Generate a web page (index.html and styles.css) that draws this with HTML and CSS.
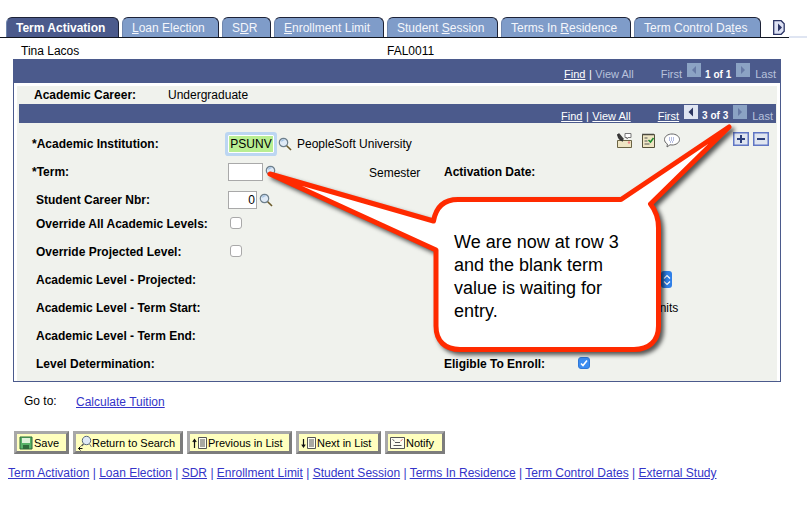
FILE: index.html
```html
<!DOCTYPE html>
<html lang="en">
<head>
<meta charset="utf-8">
<title>Term Activation</title>
<link rel="stylesheet" href="styles.css">
</head>
<body>
<svg class="defs" width="0" height="0" aria-hidden="true">
  <symbol id="mag" viewBox="0 0 14 14">
    <circle cx="5.500" cy="5.500" r="4.200" fill="#dfeaf6" stroke="#6d7f8c" stroke-width="1.200"/>
    <path d="M3.500 4.500a2.500 2.500 0 0 1 3-1.500" fill="none" stroke="#9cbde0" stroke-width="1.200"/>
    <path d="M8.700 8.700L13 13" stroke="#6b5a2a" stroke-width="1.600"/>
  </symbol>
</svg>

<nav class="tabs">
  <a class="tab tab-active t1">Term Activation</a>
  <a class="tab t2"><u>L</u>oan Election</a>
  <a class="tab t3">S<u>D</u>R</a>
  <a class="tab t4"><u>E</u>nrollment Limit</a>
  <a class="tab t5">Student <u>S</u>ession</a>
  <a class="tab t6">Terms In <u>R</u>esidence</a>
  <a class="tab t7">Term Control Da<u>t</u>es</a>
  <span class="tab-more">
    <svg width="12" height="15" viewBox="0 0 12 15"><path d="M.7.700h7.500l3 3v7.600l-3 3H.7z" fill="#dfe3f5" stroke="#2c3566" stroke-width="1.300"/><path d="M5 3.500l4 4-4 4z" fill="#2c3566"/></svg>
  </span>
</nav>

<div class="meta"><span class="meta-name">Tina Lacos</span><span>FAL0011</span></div>

<section class="panel">
  <div class="bar bar-outer">
    <a class="nav-link">Find</a><span class="sep">|</span><span class="dim">View All</span>
    <span class="dim first-gap">First</span>
    <span class="pager pager-off"><svg width="14" height="14" viewBox="0 0 14 14"><path d="M9 3L5 7l4 4z" fill="#4b5a8c" opacity=".55"/></svg></span>
    <b class="count">1 of 1</b>
    <span class="pager pager-off"><svg width="14" height="14" viewBox="0 0 14 14"><path d="M5 3l4 4-4 4z" fill="#4b5a8c" opacity=".55"/></svg></span>
    <span class="dim">Last</span>
  </div>

  <div class="inner">
    <div class="career"><b class="career-label">Academic Career:</b><span>Undergraduate</span></div>
    <div class="bar bar-inner">
      <a class="nav-link">Find</a><span class="sep">|</span><a class="nav-link">View All</a>
      <a class="nav-link first-gap">First</a>
      <span class="pager pager-on"><svg width="14" height="14" viewBox="0 0 14 14"><path d="M9 2.500L4.500 7 9 11.500z" fill="#2b3560"/></svg></span>
      <b class="count">3 of 3</b>
      <span class="pager pager-off"><svg width="14" height="14" viewBox="0 0 14 14"><path d="M5 3l4 4-4 4z" fill="#4b5a8c" opacity=".55"/></svg></span>
      <span class="dim">Last</span>
    </div>

    <div class="form">
      <div class="row">
        <label class="lbl lbl-req">*Academic Institution:</label>
        <span class="psunv">PSUNV</span>
        <svg class="mag" width="14" height="14"><use href="#mag"/></svg>
        <span class="inst">PeopleSoft University</span>
        <span class="tools">
          <svg width="17" height="16" viewBox="0 0 17 16"><path d="M1.500 8.500h14v7h-14z" fill="#efe6c4" stroke="#6b6444"/><path d="M1 3l2-2 5 6-2 2z" fill="#3c3c3c"/><path d="M2 2c0 4 2 6 5 7" fill="none" stroke="#333" stroke-width="1.500"/><path d="M9 1.500h6v4h-3l-1 1.500v-1.500H9z" fill="#fff" stroke="#777"/><circle cx="13" cy="10.500" r="1.200" fill="#e88"/></svg>
          <svg width="13" height="15" viewBox="0 0 13 15"><path d="M.5 1.500h12v13H.5z" fill="#efe6c4" stroke="#55503a"/><path d="M1 .5v2M3 .5v2M5 .5v2M7 .5v2M9 .5v2M11 .5v2" stroke="#444"/><path d="M2.500 5h3M2.500 8h3M2.500 11h5" stroke="#555"/><path d="M6.500 7l2 2 3-4" fill="none" stroke="#1d8a2e" stroke-width="1.500"/></svg>
          <svg width="16" height="15" viewBox="0 0 16 15"><path d="M8 1c4 0 7.500 2.300 7.500 5.500S12 12 8 12c-.7 0-1.400-.1-2-.2L3 14l.4-3C1.600 10 .5 8.400.5 6.500.5 3.300 4 1 8 1z" fill="#fff" stroke="#666"/><path d="M5 5h6M5 7h6M6 9h4" stroke="#6b7cc4" stroke-dasharray="1 1"/></svg>
        </span>
        <span class="addrem">
          <span class="rowbtn"><svg width="12" height="10" viewBox="0 0 12 10"><path d="M2 5h8M6 1v8" stroke="#2c3f7c" stroke-width="2"/></svg></span>
          <span class="rowbtn"><svg width="12" height="10" viewBox="0 0 12 10"><path d="M2 5h8" stroke="#2c3f7c" stroke-width="2"/></svg></span>
        </span>
      </div>

      <div class="row">
        <label class="lbl lbl-req">*Term:</label>
        <span class="field field-term"></span>
        <svg class="mag" width="14" height="14"><use href="#mag"/></svg>
        <span class="semester">Semester</span>
        <label class="lbl activation">Activation Date:</label>
      </div>

      <div class="row">
        <label class="lbl">Student Career Nbr:</label>
        <span class="field field-num">0</span>
        <svg class="mag" width="14" height="14"><use href="#mag"/></svg>
      </div>

      <div class="row row-short">
        <label class="lbl">Override All Academic Levels:</label>
        <span class="check"></span>
      </div>

      <div class="row">
        <label class="lbl">Override Projected Level:</label>
        <span class="check"></span>
      </div>

      <div class="row"><label class="lbl">Academic Level - Projected:</label><span class="select"><svg width="8" height="14" viewBox="0 0 8 14"><path d="M1 5.500l3-3 3 3M1 8.500l3 3 3-3" fill="none" stroke="#fff" stroke-width="1.200"/></svg></span></div>
      <div class="row"><label class="lbl">Academic Level - Term Start:</label><span class="units">Units</span></div>
      <div class="row"><label class="lbl">Academic Level - Term End:</label></div>
      <div class="row">
        <label class="lbl">Level Determination:</label>
        <label class="lbl eligible">Eligible To Enroll:</label>
        <span class="check check-on"><svg width="10" height="10" viewBox="0 0 10 10"><path d="M2 5.500l2 2 4-5" fill="none" stroke="#fff" stroke-width="1.600"/></svg></span>
      </div>
    </div>
  </div>
</section>

<div class="goto"><span class="goto-label">Go to:</span><a class="link goto-link">Calculate Tuition</a></div>

<div class="buttons">
  <button class="btn btn-save"><svg width="14" height="14" viewBox="0 0 14 14"><path d="M1 1h12v12H1z" fill="#58b368" stroke="#2e6b3a"/><path d="M3 2h8v5H3z" fill="#dff2d8"/><path d="M4 9h6v4H4z" fill="#2e6b3a"/></svg>Save</button>
  <button class="btn btn-return"><svg width="14" height="16" viewBox="0 0 14 16"><circle cx="8.500" cy="5.500" r="4.200" fill="#dfeaf6" stroke="#58687a"/><path d="M5.500 9l-2 2" stroke="#555" stroke-width="1.500"/><path d="M11.500 9l2 3" stroke="#777"/><path d="M.5 13.500h4M.5 13.500l2-2M.5 13.500l2 2" stroke="#111" fill="none"/></svg>Return to Search</button>
  <button class="btn btn-prev"><svg width="15" height="14" viewBox="0 0 15 14"><path d="M2.500 12V4M.8 6l1.700-2.500L4.200 6" stroke="#111" stroke-width="1.200" fill="none"/><path d="M6.500 1.500h8v11h-8z" fill="#fdfdf0" stroke="#555"/><path d="M8 4h5M8 6h5M8 8h5M8 10h5" stroke="#555"/></svg>Previous in List</button>
  <button class="btn btn-next"><svg width="15" height="14" viewBox="0 0 15 14"><path d="M2.500 3v8M.8 8.500L2.500 11l1.700-2.500" stroke="#111" stroke-width="1.200" fill="none"/><path d="M6.500 1.500h8v11h-8z" fill="#fdfdf0" stroke="#555"/><path d="M8 4h5M8 6h5M8 8h5M8 10h5" stroke="#555"/></svg>Next in List</button>
  <button class="btn btn-notify"><svg width="15" height="14" viewBox="0 0 15 14"><path d="M.5 1.500h14v11H.5z" fill="#fdfdf0" stroke="#555"/><path d="M2.500 3.500l2 1.500" stroke="#555"/><path d="M12.500 3.500l-2 1.500" stroke="#d66"/><path d="M5 6.500h5M3.500 9.500h8" stroke="#555"/></svg>Notify</button>
</div>

<div class="footer-links">
  <a class="link">Term Activation</a> | <a class="link">Loan Election</a> | <a class="link">SDR</a> | <a class="link">Enrollment Limit</a> | <a class="link">Student Session</a> | <a class="link">Terms In Residence</a> | <a class="link">Term Control Dates</a> | <a class="link">External Study</a>
</div>

<div class="callout">
  <svg class="callout-shape" width="807" height="520" viewBox="0 0 807 520">
    <path d="M270 174L433.500 221C436 207 444 199.500 458 199.500L621 199.500L729 127L650.500 204C656 211 658.500 218 658.500 228L658.500 326C658.500 341 649 349.500 634 349.500L460 349.500C445 349.500 436 341 436 326L436 250Z" fill="#fff" stroke="#ff2a00" stroke-width="5" stroke-linejoin="round"/>
  </svg>
  <p class="callout-text">We are now at row 3 and the blank term value is waiting for entry.</p>
</div>
</body>
</html>
```
FILE: styles.css
```css
* { box-sizing: border-box; }
html, body { margin: 0; padding: 0; background: #fff; }
body {
  width: 807px;
  height: 520px;
  overflow: hidden;
  position: relative;
  font-family: "Liberation Sans", Arial, sans-serif;
  font-size: 12px;
  color: #000;
}
.defs { position: absolute; }

/* tabs */
.tabs {
  display: flex;
  align-items: flex-end;
  height: 38px;
  padding: 17px 0 0 6px;
  border-bottom: 1px solid #11151f;
  width: 789px;
  gap: 3px;
  position: relative;
}
.tabs::after {
  content: "";
  position: absolute;
  left: 789px;
  bottom: -1px;
  width: 18px;
  height: 2px;
  background: #dfe5f2;
}
.tab {
  display: block;
  height: 20px;
  line-height: 20px;
  padding-left: 9px;
  background: #7f9cc9;
  color: #f4f6fb;
  border: 1px solid #1d2236;
  border-bottom: 0;
  border-left-color: #6f86ad;
  border-radius: 6px 6px 0 0;
  white-space: nowrap;
  font-size: 12px;
}
.tab-active {
  background: #4b5a8c;
  color: #fff;
  font-weight: bold;
}
.t1 { width: 113px; }
.t2 { width: 97px; }
.t3 { width: 49px; }
.t4 { width: 110px; }
.t5 { width: 111px; }
.t6 { width: 130px; }
.t7 { width: 127px; }
.tab-more { margin-left: 9px; align-self: flex-start; height: 15px; margin-top: 3px; }
.tab-more svg { display: block; }

/* key line */
.meta {
  display: flex;
  height: 21px;
  align-items: center;
  padding: 5px 0 0 21px;
  font-size: 12px;
}
.meta-name { width: 366px; }

/* panel */
.panel {
  width: 768px;
  height: 323px;
  margin-left: 13px;
  border: 1px solid #4b5a8c;
  border-top: 0;
  padding: 0 3px;
  display: flex;
  flex-direction: column;
}
.bar {
  display: flex;
  align-items: center;
  justify-content: flex-end;
  background: #4b5a8c;
  color: #fff;
  font-size: 11px;
}
.bar-outer { height: 24px; margin: 0 -4px; padding: 6px 5px 0 0; }
.bar-inner { height: 19px; margin: 0 1px 0 2px; padding: 4px 3px 0 0; }
.nav-link { color: #fff; text-decoration: underline; }
.dim { color: #b8c2dc; }
.sep { margin: 0 3.500px; color: #fff; }
.first-gap { margin-left: 27px; }
.count { margin: 0 5px 0 4px; font-size: 10px; line-height: 12px; padding-top: 1px; }
.pager {
  width: 14px;
  height: 14px;
  margin: -7px 0 0 5px;
  display: block;
}
.bar-outer .pager { margin-top: -8px; }
.pager svg { display: block; }
.pager-off { background: #8ba3c4; }
.pager-on { background: #dfe5f2; }
.count + .pager { margin-left: 0; margin-right: 5px; }
.inner {
  margin-top: 3px;
  flex: 1;
  background: #f0f2ed;
}
.career { display: flex; align-items: center; height: 18px; padding: 0 0 0 17px; }
.career-label { width: 134px; }

/* form rows */
.form { padding: 7px 0 0; }
.row {
  position: relative;
  display: flex;
  align-items: center;
  height: 28px;
  padding-left: 19px;
}
.row-short { height: 20px; margin-bottom: 4px; }
.lbl { font-weight: bold; width: 192px; flex: none; }
.lbl-req { margin-left: -4px; width: 196px; }
.psunv {
  width: 46px;
  height: 18px;
  background: #b9ee92;
  border: 1px solid #fff;
  border-radius: 1px;
  line-height: 16px;
  text-align: center;
  font-size: 12px;
  white-space: nowrap;
  box-shadow: 0 0 0 3px #bcd6f2;
  margin-right: 2px;
}
.mag { margin-left: 2px; flex: none; }
.inst { margin-left: 5px; }
.field {
  display: block;
  height: 18px;
  background: #fff;
  border: 1px solid #a9a9a9;
}
.field-term { width: 35px; }
.field-num { width: 29px; text-align: right; padding-right: 1px; line-height: 16px; }
.semester { margin-left: 90px; width: 75px; flex: none; padding-top: 1px; }
.activation { width: auto; }
.tools { position: absolute; left: 599px; top: 2px; display: flex; gap: 9px; align-items: center; }
.tools svg { display: block; }
.addrem { position: absolute; left: 716px; top: 2px; display: flex; gap: 4px; }
.rowbtn {
  display: block;
  width: 16px;
  height: 14px;
  background: #dfe5f0;
  border: 1px solid #6076c4;
  box-shadow: inset 0 0 0 .5px #6076c4;
}
.rowbtn svg { display: block; margin: 1px; }
.check {
  display: block;
  width: 12px;
  height: 12px;
  background: #fff;
  border: 1px solid #a9a9a9;
  border-radius: 3px;
  margin: -3px 0 0 2px;
}
.check-on {
  background: #3b8cf0;
  border-color: #2f78d8;
  margin: -3px 0 0 0;
}
.check-on svg { display: block; }
.select {
  position: absolute;
  left: 644px;
  top: 5px;
  width: 11px;
  height: 17px;
  border-radius: 3px;
  background: #2f7fe8;
  display: flex;
  align-items: center;
  justify-content: center;
}
.units { position: absolute; left: 634px; top: 7px; }
.eligible { width: 134px; margin-left: 216px; }

/* go to */
.goto { display: flex; height: 36px; padding: 12px 0 0 24px; line-height: 14px; }
.goto-label { width: 52px; }
.goto-link { position: relative; top: 1px; }
.link { color: #3434c8; text-decoration: underline; }

/* buttons */
.buttons { display: flex; gap: 4px; padding: 13px 0 0 14px; }
.btn {
  height: 23px;
  padding: 0 0 0 2px;
  display: flex;
  align-items: center;
  justify-content: flex-start;
  gap: 1px;
  background: #ffffbe;
  border: 3px solid;
  border-color: #a8a8a8 #7c7c7c #7c7c7c #a8a8a8;
  font-family: "Liberation Sans", Arial, sans-serif;
  font-size: 11px;
  color: #000;
  white-space: nowrap;
}
.btn-return { gap: 0; }
.btn-save { width: 55px; }
.btn-return { width: 110px; }
.btn-prev { width: 105px; }
.btn-next { width: 85px; }
.btn-notify { width: 60px; }

/* footer */
.footer-links { padding: 12px 0 0 8px; font-size: 12px; line-height: 15px; color: #3434c8; white-space: nowrap; }

/* callout annotation */
.callout { position: absolute; left: 0; top: 0; width: 807px; height: 520px; }
.callout-shape { display: block; filter: drop-shadow(3px 3px 2px rgba(0,0,0,.65)); }
.callout-text {
  position: absolute;
  left: 454px;
  top: 231px;
  width: 176px;
  margin: 0;
  font-size: 18px;
  line-height: 23px;
  color: #000;
}
```
